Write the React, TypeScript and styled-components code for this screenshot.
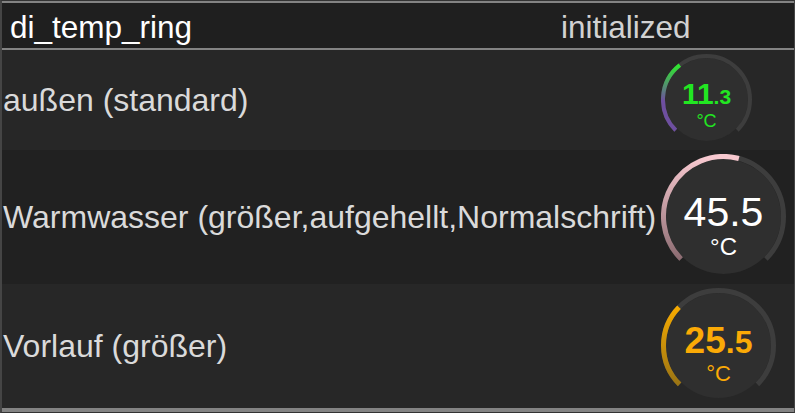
import React from "react";
import styled, { createGlobalStyle } from "styled-components";

const Global = createGlobalStyle`
  html, body { margin: 0; padding: 0; background: #2c2c2c; }
  body { font-family: "Liberation Sans", Arial, sans-serif; }
`;

const Frame = styled.div`
  width: 795px;
  box-sizing: border-box;
  border-top: 1px solid #333333;
  border-left: 2px solid #454545;
  border-right: 1px solid #454545;
  border-bottom: 1px solid #333333;
  background: #262626;
`;

const Header = styled.div`
  display: grid;
  grid-template-columns: 551px 1fr;
  align-items: center;
  height: 45px;
  padding-left: 8px;
  background: #1f1f1f;
  border-top: 2px solid #838383;
  border-bottom: 2px solid #838383;
  font-size: 31.5px;
  line-height: 1;
`;

const Title = styled.div`
  color: #ffffff;
  padding-top: 4px;
`;

const Status = styled.div`
  color: #d2d2d2;
  padding-top: 4px;
`;

const Row = styled.div<{ $dark?: boolean }>`
  display: grid;
  grid-template-columns: 657px 1fr;
  align-items: center;
  background: ${(p) => (p.$dark ? "#212121" : "#272727")};
`;

const Label = styled.div`
  padding-left: 1px;
  color: #dadada;
  font-size: 32px;
  white-space: nowrap;
`;

const GaugeCell = styled.div`
  padding: 4px 0 5px 2px;
  display: flex;
`;

const Footer = styled.div`
  height: 4px;
  background: #838383;
`;

const GaugeBox = styled.div<{ $size: number }>`
  position: relative;
  width: ${(p) => p.$size}px;
  height: ${(p) => p.$size}px;
`;

const Readout = styled.div<{ $top: number; $color: string; $gap: number }>`
  position: absolute;
  left: 0;
  right: 0;
  top: ${(p) => p.$top}px;
  display: flex;
  flex-direction: column;
  align-items: center;
  gap: ${(p) => p.$gap}px;
  color: ${(p) => p.$color};
  line-height: 1;
  font-family: "Liberation Sans", Arial, sans-serif;
`;

const Number = styled.div<{ $size: number; $bold: boolean }>`
  font-size: ${(p) => p.$size}px;
  font-weight: ${(p) => (p.$bold ? 700 : 400)};
  white-space: nowrap;
`;

const Decimal = styled.span<{ $size: number }>`
  font-size: ${(p) => p.$size}px;
`;

const Unit = styled.div<{ $size: number }>`
  font-size: ${(p) => p.$size}px;
`;

type GaugeProps = {
  id: string;
  size: number;
  stroke: number;
  frac: number;
  from: string;
  to: string;
  mid: number;
  color: string;
  int: string;
  dec: string;
  intSize: number;
  decSize: number;
  unitSize: number;
  bold: boolean;
  top: number;
  gap: number;
};

function polar(c: number, r: number, deg: number) {
  const a = (deg * Math.PI) / 180;
  return [c + r * Math.sin(a), c - r * Math.cos(a)];
}

function arcPath(c: number, r: number, a0: number, a1: number) {
  const [x0, y0] = polar(c, r, a0);
  const [x1, y1] = polar(c, r, a1);
  const large = a1 - a0 > 180 ? 1 : 0;
  return `M ${x0} ${y0} A ${r} ${r} 0 ${large} 1 ${x1} ${y1}`;
}

function Gauge(p: GaugeProps) {
  const c = p.size / 2;
  const r = c - p.stroke / 2;
  const start = 225;
  const end = start + 270;
  const valEnd = start + p.frac * 270;
  const [, yEnd] = polar(c, r, valEnd);
  const [, yStart] = polar(c, r, start);
  return (
    <GaugeBox $size={p.size}>
      <svg width={p.size} height={p.size} viewBox={`0 0 ${p.size} ${p.size}`}>
        <defs>
          <linearGradient
            id={p.id}
            gradientUnits="userSpaceOnUse"
            x1="0"
            y1={yStart}
            x2="0"
            y2={Math.min(yEnd, yStart - 10)}
          >
            <stop offset="0" stopColor={p.from} />
            <stop offset={p.mid} stopColor={p.from} />
            <stop offset="1" stopColor={p.to} />
          </linearGradient>
        </defs>
        <circle cx={c} cy={c} r={r - p.stroke / 2} fill="#2f2f2f" />
        <path d={arcPath(c, r, start, end)} fill="none" stroke="#3d3d3d" strokeWidth={p.stroke} />
        <path d={arcPath(c, r, start, valEnd)} fill="none" stroke={`url(#${p.id})`} strokeWidth={p.stroke} />
      </svg>
      <Readout $top={p.top} $color={p.color} $gap={p.gap}>
        <Number $size={p.intSize} $bold={p.bold}>
          {p.int}
          <Decimal $size={p.decSize}>{p.dec}</Decimal>
        </Number>
        <Unit $size={p.unitSize}>°C</Unit>
      </Readout>
    </GaugeBox>
  );
}

export default function App() {
  return (
    <>
      <Global />
      <Frame>
        <Header>
          <Title>di_temp_ring</Title>
          <Status>initialized</Status>
        </Header>
        <Row>
          <Label>außen (standard)</Label>
          <GaugeCell>
            <Gauge
              id="g1"
              size={91}
              stroke={4}
              frac={0.36}
              from="#6e4fa0"
              to="#2ee82e"
              mid={0.45}
              color="#22e622"
              int="11"
              dec=".3"
              intSize={30}
              decSize={21}
              unitSize={18}
              bold
              top={25}
              gap={3}
            />
          </GaugeCell>
        </Row>
        <Row $dark>
          <Label>Warmwasser (größer,aufgehellt,Normalschrift)</Label>
          <GaugeCell>
            <Gauge
              id="g2"
              size={125}
              stroke={5}
              frac={0.555}
              from="#8c6c72"
              to="#f7c8cf"
              mid={0}
              color="#ffffff"
              int="45"
              dec=".5"
              intSize={41}
              decSize={41}
              unitSize={24}
              bold={false}
              top={38}
              gap={2}
            />
          </GaugeCell>
        </Row>
        <Row>
          <Label>Vorlauf (größer)</Label>
          <GaugeCell>
            <Gauge
              id="g3"
              size={115}
              stroke={5}
              frac={0.33}
              from="#9a7414"
              to="#f7ab00"
              mid={0}
              color="#fbaa06"
              int="25"
              dec=".5"
              intSize={37}
              decSize={32}
              unitSize={22}
              bold
              top={34}
              gap={4}
            />
          </GaugeCell>
        </Row>
        <Footer />
      </Frame>
    </>
  );
}
